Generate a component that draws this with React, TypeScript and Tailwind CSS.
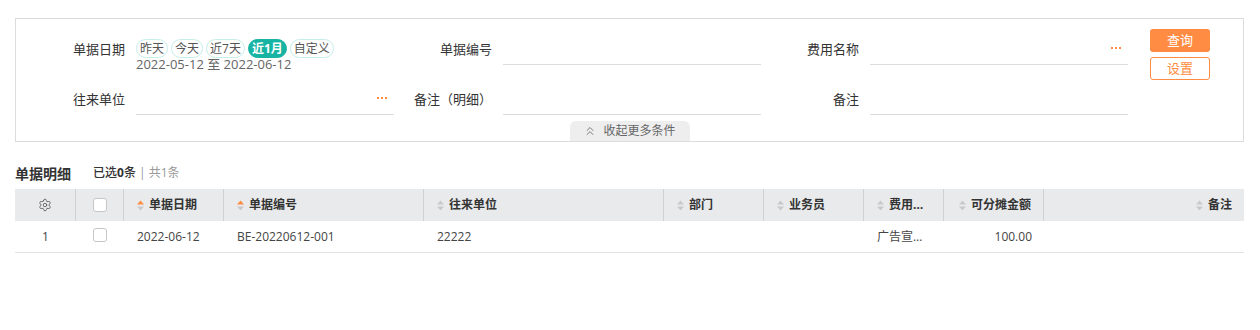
import React from "react";
import { Settings, ChevronsUp } from "lucide-react";

function SortIcon({ active }: { active?: boolean }) {
  return (
    <svg width="7" height="11" viewBox="0 0 7 11" className="shrink-0">
      <path d="M3.5 0.5 L7 4.5 H0 Z" fill={active ? "#ff8c42" : "#c9c9c9"} />
      <path d="M0 6.5 H7 L3.5 10.5 Z" fill="#c9c9c9" />
    </svg>
  );
}

function Dots() {
  return (
    <div className="flex gap-[2px]">
      <span className="block w-[2px] h-[2px] bg-[#ff8c42]" />
      <span className="block w-[2px] h-[2px] bg-[#ff8c42]" />
      <span className="block w-[2px] h-[2px] bg-[#ff8c42]" />
    </div>
  );
}

function Field({ label, dots }: { label: string; dots?: boolean }) {
  return (
    <div className="flex w-[367px]">
      <div className="w-[98px] text-right pt-[12px] text-[13px] leading-[16px] text-[#333]">{label}</div>
      <div className="ml-[11px] w-[258px] h-[36px] border-b border-[#dcdcdc] flex justify-end pr-[7px] pt-[18px]">
        {dots ? <Dots /> : null}
      </div>
    </div>
  );
}

function Chip({ text, active }: { text: string; active?: boolean }) {
  return (
    <span
      className={
        active
          ? "h-[19px] px-[3px] rounded-full border border-[#17b3a3] bg-[#17b3a3] text-white font-bold text-[12px] leading-[17px] flex items-center"
          : "h-[19px] px-[3px] rounded-full border border-[#c6eee9] text-[#555] text-[12px] leading-[17px] flex items-center"
      }
    >
      {text}
    </span>
  );
}

const cols = [
  { w: "w-[61px]" },
  { w: "w-[48px]" },
  { w: "w-[100px]" },
  { w: "w-[200px]" },
  { w: "w-[240px]" },
  { w: "w-[100px]" },
  { w: "w-[100px]" },
  { w: "w-[80px]" },
  { w: "w-[100px]" },
  { w: "w-[200px]" },
];

function HeadCell({ w, label, active, right, last }: { w: string; label: string; active?: boolean; right?: boolean; last?: boolean }) {
  return (
    <div
      className={`${w} h-full flex items-center gap-[5px] px-[13px] ${right ? "justify-end pr-[12px]" : ""} ${last ? "" : "border-r border-[#d0d1d3]"}`}
    >
      <SortIcon active={active} />
      <span className="truncate font-bold text-[12px] text-[#333]">{label}</span>
    </div>
  );
}

function Box() {
  return <span className="block w-[14px] h-[14px] rounded-[3px] border border-[#c6c6c6] bg-white" />;
}

export default function App() {
  return (
    <div className="w-[1260px] h-[330px] bg-white flex flex-col pt-[18px] font-['Open_Sans','Noto_Sans_CJK_SC',sans-serif] text-[#333]">
      <div className="ml-[15px] w-[1229px] border border-[#dcdcdc] pt-[10px] pl-[11px] flex flex-col">
        <div className="flex">
          <div className="flex flex-col">
            <div className="flex">
              <div className="flex w-[367px]">
                <div className="w-[98px] text-right pt-[12px] text-[13px] leading-[16px] text-[#333]">单据日期</div>
                <div className="ml-[11px] w-[258px] h-[36px] flex flex-col pt-[10px]">
                  <div className="flex gap-[3px]">
                    <Chip text="昨天" />
                    <Chip text="今天" />
                    <Chip text="近7天" />
                    <Chip text="近1月" active />
                    <Chip text="自定义" />
                  </div>
                  <div className="text-[13px] leading-[12px] text-[#666] whitespace-nowrap">2022-05-12 至 2022-06-12</div>
                </div>
              </div>
              <Field label="单据编号" />
              <Field label="费用名称" dots />
            </div>
            <div className="flex mt-[14px]">
              <Field label="往来单位" dots />
              <Field label="备注（明细）" />
              <Field label="备注" />
            </div>
          </div>
          <div className="ml-[22px] flex flex-col gap-[5px]">
            <button className="w-[60px] h-[23px] rounded-[3px] bg-[#ff8c42] text-white text-[13px] leading-[23px]">查询</button>
            <button className="w-[60px] h-[23px] rounded-[3px] border border-[#ff8c42] text-[#ff8c42] text-[13px] leading-[21px] bg-white">设置</button>
          </div>
        </div>
        <div className="mt-[6px] flex justify-center pr-[11px]">
          <div className="w-[120px] h-[20px] bg-[#eeeeee] rounded-t-[6px] flex items-center justify-center gap-[6px] text-[12px] text-[#666]">
            <ChevronsUp size={14} strokeWidth={1.5} color="#666" />
            <span>收起更多条件</span>
          </div>
        </div>
      </div>

      <div className="ml-[15px] w-[1229px] mt-[23px]">
        <div className="flex items-center h-[16px] mb-[8px]">
          <span className="font-bold text-[14px] text-[#333]">单据明细</span>
          <span className="ml-[22px] text-[12px] text-[#333]">
            <span className="font-medium">已选</span>
            <span className="font-bold">0</span>
            <span className="font-medium">条</span>
            <span className="text-[#999]"> | 共1条</span>
          </span>
        </div>
        <div className="flex h-[32px] bg-[#e9eaec]">
          <div className={`${cols[0].w} h-full flex items-center justify-center border-r border-[#d0d1d3]`}>
            <Settings size={14} strokeWidth={1.4} color="#555" />
          </div>
          <div className={`${cols[1].w} h-full flex items-center justify-center border-r border-[#d0d1d3]`}>
            <Box />
          </div>
          <HeadCell w={cols[2].w} label="单据日期" active />
          <HeadCell w={cols[3].w} label="单据编号" active />
          <HeadCell w={cols[4].w} label="往来单位" />
          <HeadCell w={cols[5].w} label="部门" />
          <HeadCell w={cols[6].w} label="业务员" />
          <HeadCell w={cols[7].w} label="费用名称" />
          <HeadCell w={cols[8].w} label="可分摊金额" right />
          <HeadCell w={cols[9].w} label="备注" right last />
        </div>
        <div className="flex h-[32px] border-b border-[#e3e3e3] text-[12px] text-[#444]">
          <div className={`${cols[0].w} flex items-center justify-center`}>1</div>
          <div className={`${cols[1].w} flex items-center justify-center`}>
            <span className="block w-[14px] h-[14px] rounded-[3px] border border-[#c6c6c6] bg-white -mt-[4px]" />
          </div>
          <div className={`${cols[2].w} flex items-center px-[13px]`}>2022-06-12</div>
          <div className={`${cols[3].w} flex items-center px-[13px]`}>BE-20220612-001</div>
          <div className={`${cols[4].w} flex items-center px-[13px]`}>22222</div>
          <div className={`${cols[5].w}`} />
          <div className={`${cols[6].w}`} />
          <div className={`${cols[7].w} flex items-center px-[13px] min-w-0`}>
            <span className="truncate">广告宣传费</span>
          </div>
          <div className={`${cols[8].w} flex items-center justify-end pr-[12px]`}>100.00</div>
          <div className={`${cols[9].w}`} />
        </div>
      </div>
    </div>
  );
}
